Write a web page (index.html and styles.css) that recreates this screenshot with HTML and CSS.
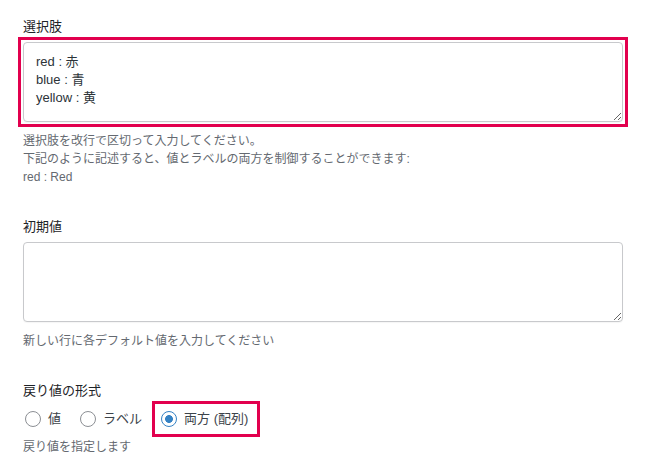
FILE: index.html
```html
<!DOCTYPE html>
<html lang="ja">
<head>
<meta charset="utf-8">
<title>Field settings</title>
<link rel="stylesheet" href="styles.css">
</head>
<body>
<div class="field">
  <label class="title" for="choices">選択肢</label>
  <div class="highlight">
    <textarea id="choices" class="input">red : 赤
blue : 青
yellow : 黄</textarea>
  </div>
  <p class="help">選択肢を改行で区切って入力してください。<br>下記のように記述すると、値とラベルの両方を制御することができます:<br>red : Red</p>
</div>
<div class="field">
  <label class="title" for="defaults">初期値</label>
  <textarea id="defaults" class="input"></textarea>
  <p class="help">新しい行に各デフォルト値を入力してください</p>
</div>
<div class="field">
  <span class="title">戻り値の形式</span>
  <div class="radios">
    <label class="radio"><input type="radio" name="ret">値</label>
    <label class="radio"><input type="radio" name="ret">ラベル</label>
    <label class="radio highlight-box"><input type="radio" name="ret" checked>両方 (配列)</label>
  </div>
  <p class="help help-tight">戻り値を指定します</p>
</div>
</body>
</html>
```
FILE: styles.css
```css
html, body {
  margin: 0;
  background: #fff;
}
body {
  padding: 18px 0 0 23px;
  font-family: "Liberation Sans", "Noto Sans CJK JP", sans-serif;
  font-size: 13px;
  line-height: 18px;
  color: #1d2327;
}
.field {
  margin-bottom: 32px;
}
.title {
  display: block;
  line-height: 18px;
  margin-bottom: 6px;
  color: #1d2327;
}
.input {
  display: block;
  box-sizing: border-box;
  width: 600px;
  height: 80px;
  margin: 0;
  padding: 10px 12px;
  border: 1px solid #c8c9cc;
  border-radius: 4px;
  font-family: "Liberation Sans", "Noto Sans CJK JP", sans-serif;
  font-size: 13px;
  line-height: 18px;
  color: #2c3338;
  background: #fff;
  resize: both;
  box-shadow: 0 1px 1px rgba(0,0,0,0.04);
}
.highlight {
  width: 600px;
  outline: 3px solid #e2004e;
  outline-offset: 2px;
}
.help {
  margin: 10px 0 0;
  font-size: 12px;
  line-height: 18px;
  color: #646970;
}
.help-tight {
  margin-top: 8px;
}
.radios {
  display: flex;
  gap: 17px;
  margin-top: 8px;
  line-height: 22px;
}
.radio {
  display: inline-flex;
  align-items: center;
  gap: 7px;
  height: 22px;
  color: #3c434a;
}
.radio input {
  appearance: none;
  -webkit-appearance: none;
  width: 16px;
  height: 16px;
  margin: 0 0 0 2px;
  border: 1px solid #8c8f94;
  border-radius: 50%;
  background: #fff;
  box-sizing: border-box;
}
.radio input:checked {
  border-color: #3582c4;
  background: radial-gradient(circle, #3582c4 0 3.6px, #fff 4.2px);
}
.highlight-box {
  padding-right: 5px;
  outline: 3px solid #e2004e;
  outline-offset: 4px;
}
```
